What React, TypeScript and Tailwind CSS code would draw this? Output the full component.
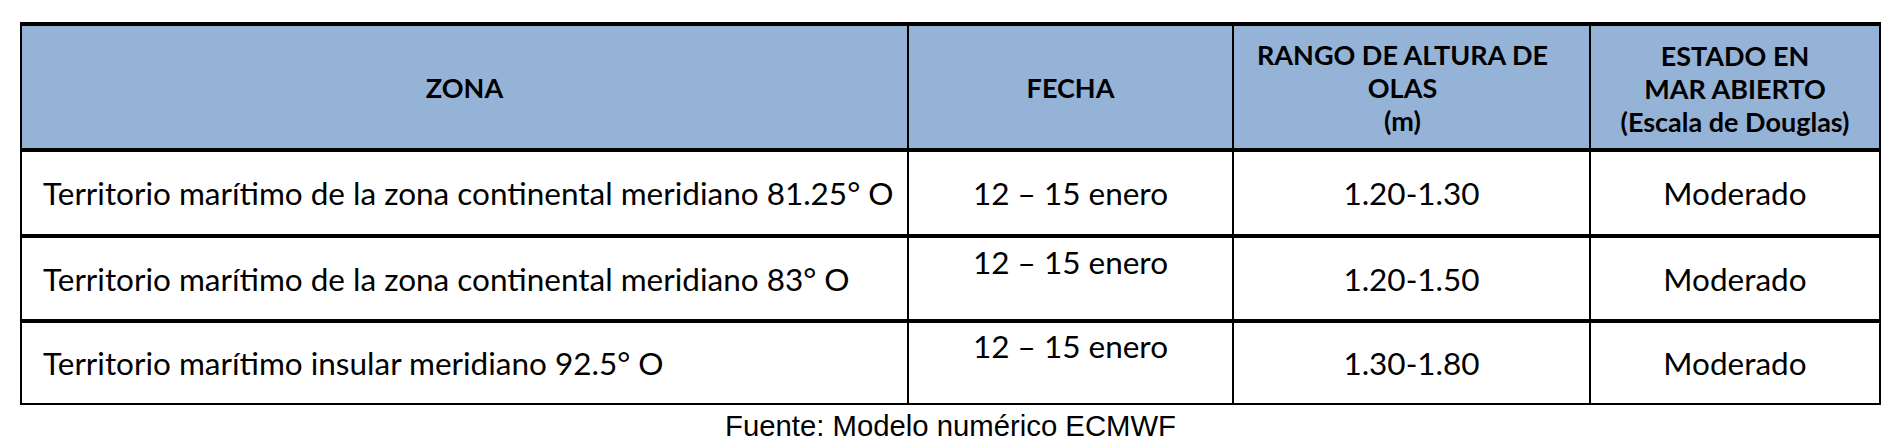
import React from 'react';

const rows = [
  {
    zona: 'Territorio marítimo de la zona continental meridiano 81.25° O',
    fecha: '12 – 15 enero',
    fechaTop: false,
    rango: '1.20-1.30',
    estado: 'Moderado',
    h: 'h-[86px] border-b-4',
  },
  {
    zona: 'Territorio marítimo de la zona continental meridiano 83° O',
    fecha: '12 – 15 enero',
    fechaTop: true,
    rango: '1.20-1.50',
    estado: 'Moderado',
    h: 'h-[85px] border-b-4',
  },
  {
    zona: 'Territorio marítimo insular meridiano 92.5° O',
    fecha: '12 – 15 enero',
    fechaTop: true,
    rango: '1.30-1.80',
    estado: 'Moderado',
    h: 'h-[80px]',
  },
];

const cols = 'grid grid-cols-[887px_325px_357px_288px]';

const App = () => {
  return (
    <div className="w-[1902px] h-[448px] bg-white pt-[22px] pl-[20px] font-['Lato','Open_Sans',sans-serif] text-black">
      {/* Table */}
      <div className="w-[1861px] border-t-4 border-b-2 border-x-2 border-black">
        {/* Header */}
        <div className={`${cols} h-[126px] border-b-4 border-black bg-[#95b3d7] font-bold text-[27px] leading-[33px]`}>
          <div className="flex items-center justify-center border-r-2 border-black">ZONA</div>
          <div className="flex items-center justify-center border-r-2 border-black">FECHA</div>
          <div className="flex flex-col items-center justify-center border-r-2 border-black text-center pr-[18px]">
            <span>RANGO DE ALTURA DE</span>
            <span>OLAS</span>
            <span>(m)</span>
          </div>
          <div className="flex flex-col items-center justify-center text-center pt-[3px]">
            <span>ESTADO EN</span>
            <span>MAR ABIERTO</span>
            <span>(Escala de Douglas)</span>
          </div>
        </div>

        {/* Body rows */}
        {rows.map((r, i) => (
          <div key={i} className={`${cols} ${r.h} border-black text-[31.5px] leading-[34px]`}>
            <div className="flex items-center pl-[21px] border-r-2 border-black whitespace-nowrap">{r.zona}</div>
            <div className="flex flex-col items-center justify-center border-r-2 border-black">
              <span>{r.fecha}</span>
              {r.fechaTop && <span className="h-[34px]">&nbsp;</span>}
            </div>
            <div className="flex items-center justify-center border-r-2 border-black">{r.rango}</div>
            <div className="flex items-center justify-center">{r.estado}</div>
          </div>
        ))}
      </div>

      {/* Source */}
      <p className="w-[1861px] mt-[5px] text-center font-['Liberation_Sans',Arial,sans-serif] text-[29.3px] leading-[32px]">
        Fuente: Modelo numérico ECMWF
      </p>
    </div>
  );
};

export default App;
